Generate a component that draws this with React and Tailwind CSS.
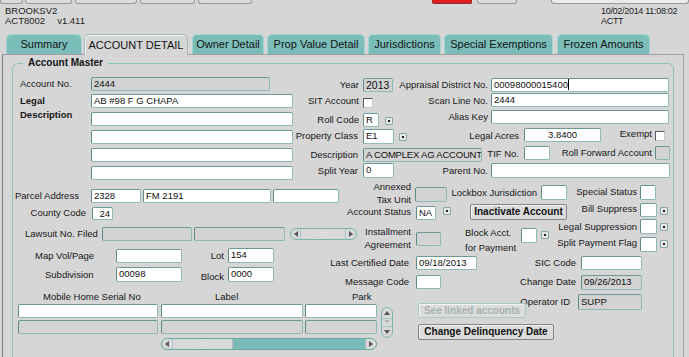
import React from 'react';

// one text item (Oracle Forms style)
const F = ({ c = "", gray, h, children }) => {
    const hh = h === 15 ? "h-[15px]" : h === 16 ? "h-[16px]" : h === 13 ? "h-[13px]" : "h-[14px]";
    return (
        <div className={`${hh} shrink-0 border border-[#8dbab6] border-l-[#5d8b88] border-t-[#6c9a97] rounded-[2px] px-[2px] text-[9.5px] leading-[12px] text-[#111] overflow-hidden whitespace-nowrap ${gray ? "bg-[#d3d3d3]" : "bg-white"} ${c}`}>
            {children}
        </div>
    );
};

const L = ({ c = "", bold, children }) => (
    <div className={`shrink-0 h-[14px] leading-[14px] text-[9.5px] whitespace-nowrap text-[#161616] ${bold ? "font-bold" : ""} ${c}`}>
        {children}
    </div>
);

const L2 = ({ c = "", a, b }) => (
    <div className={`shrink-0 text-[9.5px] whitespace-nowrap text-[#161616] ${c}`}>
        <div>{a}</div>
        <div>{b}</div>
    </div>
);

const Lov = ({ c = "" }) => (
    <div className={`shrink-0 w-[8px] h-[8px] border border-[#86a8a5] bg-[#e6e6e6] rounded-[1px] flex items-center justify-center ${c}`}>
        <div className="w-[2px] h-[2px] bg-[#222]" />
    </div>
);

const Check = ({ c = "" }) => (
    <div className={`shrink-0 w-[10px] h-[10px] bg-white border border-[#5a5a5a] border-r-[#c8c8c8] border-b-[#c8c8c8] ${c}`} />
);

const Btn = ({ c = "", disabled, children }) => (
    <div className={`shrink-0 border rounded-[2px] bg-[#dcdcdc] text-[10px] font-bold text-center whitespace-nowrap shadow-[inset_1px_1px_0_#f2f2f2] ${disabled ? "border-[#a9cbc8] text-[#a7b1b0]" : "border-[#858585] text-[#111]"} ${c}`}>
        {children}
    </div>
);

const ArrowL = () => (
    <svg width="4" height="6" viewBox="0 0 4 6"><polygon points="4,0 4,6 0,3" fill="#555" /></svg>
);
const ArrowR = () => (
    <svg width="4" height="6" viewBox="0 0 4 6"><polygon points="0,0 0,6 4,3" fill="#555" /></svg>
);
const Dots = () => (
    <svg width="10" height="5" viewBox="0 0 10 5">
        <rect x="3" y="0" width="1" height="1" fill="#f4f4f4" />
        <rect x="6" y="0" width="1" height="1" fill="#f4f4f4" />
        <rect x="1" y="3" width="1" height="1" fill="#f4f4f4" />
        <rect x="4" y="3" width="1" height="1" fill="#f4f4f4" />
        <rect x="7" y="3" width="1" height="1" fill="#f4f4f4" />
    </svg>
);

const HScrollSmall = ({ c = "" }) => (
    <div className={`shrink-0 flex h-[12px] w-[67px] border border-[#7ab6b1] rounded-[6px] overflow-hidden bg-[#d9d9d9] ${c}`}>
        <div className="w-[10px] border-r border-[#9fc9c5] flex items-center justify-center"><ArrowL /></div>
        <div className="flex-1 flex items-center justify-center"><Dots /></div>
        <div className="w-[11px] border-l border-[#9fc9c5] flex items-center justify-center"><ArrowR /></div>
    </div>
);

const HScrollBig = ({ c = "" }) => (
    <div className={`shrink-0 flex h-[12px] w-[216px] border border-[#6aaaa5] rounded-[6px] overflow-hidden bg-[#78bbb7] ${c}`}>
        <div className="w-[11px] bg-[#d9d9d9] border-r border-[#9fc9c5] flex items-center justify-center"><ArrowL /></div>
        <div className="w-[60px] bg-[#d9d9d9] border-r border-[#b9b9b9] flex items-center justify-center"><Dots /></div>
        <div className="flex-1" />
        <div className="w-[11px] bg-[#d9d9d9] border-l border-[#9fc9c5] flex items-center justify-center"><ArrowR /></div>
    </div>
);

const VScroll = ({ c = "" }) => (
    <div className={`shrink-0 flex flex-col w-[12px] h-[31px] border border-[#7ab6b1] rounded-[6px] overflow-hidden bg-[#d9d9d9] ${c}`}>
        <div className="h-[11px] border-b border-[#9fc9c5] flex items-center justify-center">
            <svg width="6" height="4" viewBox="0 0 6 4"><polygon points="0,4 6,4 3,0" fill="#555" /></svg>
        </div>
        <div className="flex-1 flex items-start justify-center pt-[1px]">
            <div className="w-[4px] h-[2px] bg-[#b5b5b5]" />
        </div>
        <div className="h-[11px] border-t border-[#9fc9c5] flex items-center justify-center">
            <svg width="6" height="4" viewBox="0 0 6 4"><polygon points="0,0 6,0 3,4" fill="#555" /></svg>
        </div>
    </div>
);

const Tab = ({ c = "", active, children }) => (
    <div className={`shrink-0 flex items-center justify-center rounded-t-[5px] text-[11px] whitespace-nowrap text-[#141414] ${active ? "h-[21px] -mb-[1px] relative z-10 bg-[#d6d6d6] border border-b-0 border-[#a3b9b7] shadow-[inset_1px_1px_0_#f0f0f0]" : "h-[20px] bg-[#7abdb9] border border-b-0 border-[#a7d6d2]"} ${c}`}>
        {children}
    </div>
);

const App = () => {
    return (
        <div className="w-[689px] h-[357px] overflow-hidden bg-[#d6d6d6] font-['Liberation_Sans',Arial,sans-serif] text-[#141414]">
            {/* toolbar edges */}
            <div className="flex h-[5px]">
                <div className="w-[23px] h-[4px] border border-t-0 border-[#9a9a9a] rounded-b-[3px] bg-[#dcdcdc]" />
                <div className="ml-[2px] w-[47px] h-[4px] border border-t-0 border-[#9a9a9a] rounded-b-[3px] bg-[#dcdcdc]" />
                <div className="ml-[3px] w-[62px] h-[4px] border border-t-0 border-[#9a9a9a] rounded-b-[3px] bg-[#dcdcdc]" />
                <div className="ml-[3px] w-[55px] h-[4px] border border-t-0 border-[#9a9a9a] rounded-b-[3px] bg-[#dcdcdc]" />
                <div className="ml-[3px] w-[54px] h-[4px] border border-t-0 border-[#9a9a9a] rounded-b-[3px] bg-[#dcdcdc]" />
                <div className="ml-[180px] w-[40px] h-[4px] border border-t-0 border-[#8a2a2a] rounded-b-[2px] bg-[#e01f1f]" />
                <div className="ml-[5px] w-[40px] h-[4px] border border-t-0 border-[#9a9a9a] rounded-b-[3px] bg-[#dcdcdc]" />
                <div className="ml-[34px] w-[138px] h-[4px] border border-t-0 border-[#9a9a9a] rounded-b-[3px] bg-[#ececec]" />
            </div>

            {/* header */}
            <div className="flex h-[29px] pt-[1px] text-[9.5px] leading-[10px] text-[#1e1e1e]">
                <div className="ml-[5px] w-[596px]">
                    <div>BROOKSV2</div>
                    <div>ACT8002<span className="ml-[12px]">v1.411</span></div>
                </div>
                <div className="text-[9px] tracking-[-0.3px]">
                    <div>10/02/2014 11:08:02</div>
                    <div>ACTT</div>
                </div>
            </div>

            {/* tabs */}
            <div className="flex items-end h-[20px]">
                <Tab c="ml-[6px] w-[76px]">Summary</Tab>
                <Tab c="ml-[2px] w-[104px]" active>ACCOUNT DETAIL</Tab>
                <Tab c="ml-[4px] w-[72px]">Owner Detail</Tab>
                <Tab c="ml-[3px] w-[98px]">Prop Value Detail</Tab>
                <Tab c="ml-[3px] w-[73px]">Jurisdictions</Tab>
                <Tab c="ml-[3px] w-[109px]">Special Exemptions</Tab>
                <Tab c="ml-[4px] w-[93px]">Frozen Amounts</Tab>
            </div>

            {/* tab page */}
            <div className="ml-[2px] w-[682px] h-[303px] border border-b-0 border-[#a0a0a0] border-l-[#7c7c7c]">
                <fieldset className="ml-[9px] mt-[1px] w-[662px] h-[330px] border border-[#88c3be] rounded-[6px]">
                    <legend className="ml-[10px] px-[5px] text-[10px] font-bold leading-[14px] text-[#141414]">Account Master</legend>

                    <div className="pt-[7px]">
                        {/* row 1 */}
                        <div className="flex items-start h-[17px]">
                            <L c="ml-[7px] w-[71px]">Account No.</L>
                            <F gray c="w-[179px]">2444</F>
                            <L c="w-[89px] text-right mt-[1px]">Year</L>
                            <F gray c="ml-[4px] w-[30px] mt-[1px] text-[10.5px]">2013</F>
                            <L c="w-[95px] text-right mt-[1px]">Appraisal District No.</L>
                            <F c="ml-[3px] w-[178px] mt-[1px]">
                                00098000015400<span className="inline-block w-[1px] h-[11px] bg-black align-top" />
                            </F>
                        </div>

                        {/* row 2 */}
                        <div className="flex items-start h-[17px]">
                            <L bold c="ml-[7px] w-[71px]">Legal</L>
                            <F c="w-[202px]">AB #98 F G CHAPA</F>
                            <L c="w-[66px] text-right">SIT Account</L>
                            <Check c="ml-[4px] mt-[4px]" />
                            <L c="w-[115px] text-right">Scan Line No.</L>
                            <F c="ml-[3px] w-[178px] -mt-[1px]">2444</F>
                        </div>

                        {/* row 3 */}
                        <div className="flex items-start h-[18px]">
                            <L bold c="ml-[7px] w-[71px] -mt-[3px]">Description</L>
                            <F c="w-[202px] mt-[1px]" />
                            <L c="w-[66px] text-right mt-[2px]">Roll Code</L>
                            <F c="ml-[4px] w-[16px] mt-[2px]">R</F>
                            <Lov c="ml-[6px] mt-[6px]" />
                            <L c="w-[95px] text-right -mt-[1px]">Alias Key</L>
                            <F c="ml-[3px] w-[178px] -mt-[1px]" />
                        </div>

                        {/* row 4 */}
                        <div className="flex items-start h-[18px]">
                            <F c="ml-[78px] w-[202px] mt-[1px]" />
                            <L c="w-[65px] text-right">Property Class</L>
                            <F h={15} c="ml-[5px] w-[31px]">E1</F>
                            <Lov c="ml-[5px] mt-[4px]" />
                            <L c="w-[112px] text-right">Legal Acres</L>
                            <F c="ml-[5px] w-[77px] -mt-[1px] text-center">3.8400</F>
                            <L c="w-[51px] text-right -mt-[2px]">Exempt</L>
                            <Check c="ml-[3px] mt-[2px]" />
                        </div>

                        {/* row 5 */}
                        <div className="flex items-start h-[17px]">
                            <F c="ml-[78px] w-[202px] mt-[1px]" />
                            <L c="w-[65px] text-right mt-[1px]">Description</L>
                            <F gray c="ml-[5px] w-[119px] mt-[1px] tracking-[-0.2px]">A COMPLEX AG ACCOUNT</F>
                            <L c="w-[37px] text-right">TIF No.</L>
                            <F c="ml-[5px] w-[26px] -mt-[1px]" />
                            <L c="w-[102px] text-right -mt-[1px]">Roll Forward Account</L>
                            <F gray c="ml-[3px] w-[15px] -mt-[1px]" />
                        </div>

                        {/* row 6 */}
                        <div className="flex items-start h-[21px]">
                            <F c="ml-[78px] w-[202px] mt-[2px]" />
                            <L c="w-[65px] text-right">Split Year</L>
                            <F h={15} c="ml-[5px] w-[31px] -mt-[1px]">0</F>
                            <L c="w-[94px] text-right">Parent No.</L>
                            <F h={15} c="ml-[3px] w-[179px] -mt-[1px]" />
                        </div>

                        {/* row 7 */}
                        <div className="flex items-start h-[18px]">
                            <L c="ml-[2px] w-[76px] mt-[4px]">Parcel Address</L>
                            <F c="w-[50px] mt-[4px]">2328</F>
                            <F c="ml-[2px] w-[128px] mt-[4px]">FM 2191</F>
                            <F c="ml-[2px] w-[66px] mt-[4px]" />
                            <L2 c="w-[72px] text-right leading-[13px] -mt-[5px]" a="Annexed" b="Tax Unit" />
                            <F gray h={15} c="ml-[4px] w-[32px] mt-[2px]" />
                            <L c="w-[90px] text-right mt-[1px]">Lockbox Jurisdiction</L>
                            <F h={15} c="ml-[4px] w-[26px]" />
                            <L c="w-[70px] text-right">Special Status</L>
                            <F h={15} c="ml-[3px] w-[16px]" />
                        </div>

                        {/* row 8 */}
                        <div className="flex items-start h-[24px]">
                            <L c="w-[73px] text-right mt-[3px]">County Code</L>
                            <F h={13} c="ml-[6px] w-[21px] mt-[4px] text-right">24</F>
                            <L c="w-[298px] text-right mt-[2px]">Account Status</L>
                            <F c="ml-[5px] w-[20px] mt-[3px]">NA</F>
                            <Lov c="ml-[7px] mt-[4px]" />
                            <Btn c="ml-[19px] w-[97px] h-[16px] leading-[14px] mt-[1px]">Inactivate Account</Btn>
                            <L c="w-[70px] text-right -mt-[1px]">Bill Suppress</L>
                            <F c="ml-[3px] w-[17px]" />
                            <Lov c="ml-[3px] mt-[4px]" />
                        </div>

                        {/* row 9 */}
                        <div className="flex items-start h-[22px]">
                            <L c="ml-[12px] w-[77px]">Lawsuit No. Filed</L>
                            <F gray c="w-[90px]" />
                            <F gray c="ml-[2px] w-[91px]" />
                            <HScrollSmall c="ml-[5px] mt-[1px]" />
                            <L2 c="w-[54px] text-right leading-[13px] -mt-[2px]" a="Installment" b="Agreement" />
                            <F gray c="ml-[5px] w-[25px] mt-[5px]" />
                            <L2 c="ml-[24px] w-[56px] leading-[15px] -mt-[2px]" a="Block Acct." b="for Payment" />
                            <F h={15} c="w-[16px] mt-[1px]" />
                            <Lov c="ml-[4px] mt-[4px]" />
                            <div className="-mt-[8px]">
                                <div className="flex items-start">
                                    <L c="w-[88px] text-right mt-[1px]">Legal Suppression</L>
                                    <F h={15} c="ml-[3px] w-[17px]" />
                                    <Lov c="ml-[3px] mt-[4px]" />
                                </div>
                                <div className="flex items-start mt-[3px]">
                                    <L c="w-[88px] text-right -mt-[1px]">Split Payment Flag</L>
                                    <F h={15} c="ml-[3px] w-[17px]" />
                                    <Lov c="ml-[3px] mt-[3px]" />
                                </div>
                            </div>
                        </div>

                        {/* row 10 */}
                        <div className="flex items-start h-[18px]">
                            <L c="ml-[22px] w-[81px]">Map Vol/Page</L>
                            <F c="w-[66px]" />
                            <L c="w-[42px] text-right">Lot</L>
                            <F h={15} c="ml-[4px] w-[46px] -mt-[1px]">154</F>
                            <L c="w-[135px] text-right mt-[7px]">Last Certified Date</L>
                            <F c="ml-[7px] w-[61px] mt-[7px]">09/18/2013</F>
                            <L c="w-[99px] text-right mt-[7px]">SIC Code</L>
                            <F c="ml-[5px] w-[61px] mt-[7px]" />
                        </div>

                        {/* row 11 */}
                        <div className="flex items-start h-[23px]">
                            <L c="ml-[32px] w-[71px] mt-[1px]">Subdivision</L>
                            <F h={15} c="w-[66px]">00098</F>
                            <L c="w-[42px] text-right mt-[3px]">Block</L>
                            <F h={15} c="ml-[4px] w-[46px]">0000</F>
                            <L c="w-[135px] text-right mt-[8px]">Message Code</L>
                            <F c="ml-[7px] w-[25px] mt-[8px]" />
                            <L c="w-[135px] text-right mt-[8px]">Change Date</L>
                            <F gray h={15} c="ml-[5px] w-[61px] mt-[8px]">09/26/2013</F>
                        </div>

                        {/* row 12 */}
                        <div className="flex items-start h-[14px]">
                            <L c="ml-[30px] w-[172px]">Mobile Home Serial No</L>
                            <L c="w-[137px]">Label</L>
                            <L c="w-[25px]">Park</L>
                            <L c="w-[193px] text-right mt-[5px]">Operator ID</L>
                            <F gray h={16} c="ml-[8px] w-[64px] mt-[4px] leading-[14px]">SUPP</F>
                        </div>

                        {/* row 13 */}
                        <div className="flex items-start h-[16px]">
                            <F c="ml-[5px] w-[140px]" />
                            <F c="ml-[3px] w-[142px]" />
                            <F c="ml-[2px] w-[72px]" />
                            <VScroll c="ml-[4px] mt-[3px]" />
                            <Btn disabled c="ml-[25px] w-[108px] h-[15px] leading-[13px] -mt-[1px]">See linked accounts</Btn>
                        </div>

                        {/* row 14 */}
                        <div className="flex items-start h-[18px]">
                            <F gray c="ml-[5px] w-[140px]" />
                            <F gray c="ml-[3px] w-[142px]" />
                            <F gray c="ml-[2px] w-[72px]" />
                            <Btn c="ml-[41px] w-[136px] h-[16px] leading-[14px] mt-[4px]">Change Delinquency Date</Btn>
                        </div>

                        {/* row 15 */}
                        <div className="flex items-start h-[14px]">
                            <HScrollBig c="ml-[148px]" />
                        </div>
                    </div>
                </fieldset>
            </div>
        </div>
    );
};

export default App;
